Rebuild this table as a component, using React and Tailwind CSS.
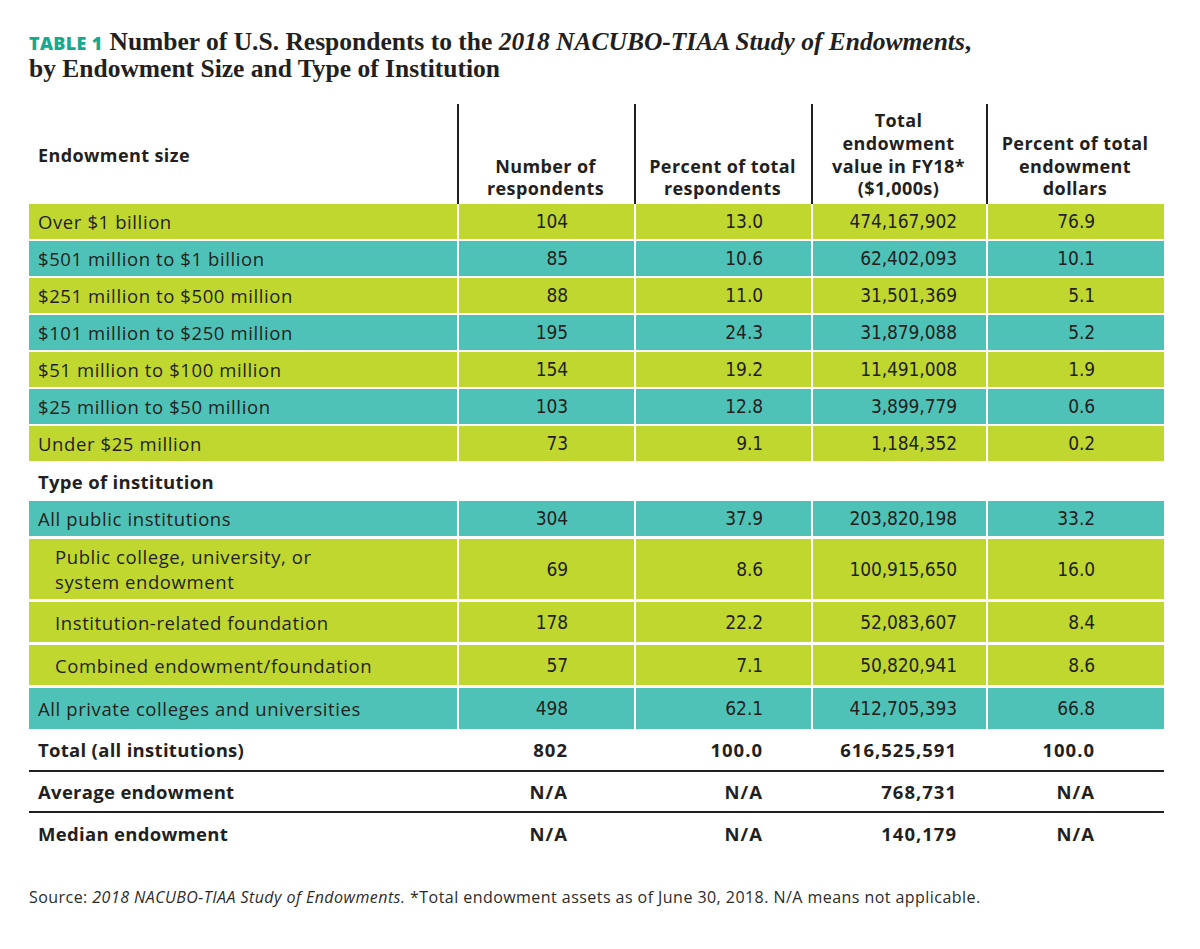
const sizeRows = [
  { label: 'Over $1 billion', n: '104', pct: '13.0', total: '474,167,902', dollars: '76.9', color: 'lime' },
  { label: '$501 million to $1 billion', n: '85', pct: '10.6', total: '62,402,093', dollars: '10.1', color: 'teal' },
  { label: '$251 million to $500 million', n: '88', pct: '11.0', total: '31,501,369', dollars: '5.1', color: 'lime' },
  { label: '$101 million to $250 million', n: '195', pct: '24.3', total: '31,879,088', dollars: '5.2', color: 'teal' },
  { label: '$51 million to $100 million', n: '154', pct: '19.2', total: '11,491,008', dollars: '1.9', color: 'lime' },
  { label: '$25 million to $50 million', n: '103', pct: '12.8', total: '3,899,779', dollars: '0.6', color: 'teal' },
  { label: 'Under $25 million', n: '73', pct: '9.1', total: '1,184,352', dollars: '0.2', color: 'lime' },
];

const typeRows = [
  { label: 'All public institutions', n: '304', pct: '37.9', total: '203,820,198', dollars: '33.2', color: 'teal', h: 'h-[35px]' },
  { label: ['Public college, university, or', 'system endowment'], n: '69', pct: '8.6', total: '100,915,650', dollars: '16.0', color: 'lime', h: 'h-[60px]', indent: true },
  { label: 'Institution-related foundation', n: '178', pct: '22.2', total: '52,083,607', dollars: '8.4', color: 'lime', h: 'h-[40px]', indent: true },
  { label: 'Combined endowment/foundation', n: '57', pct: '7.1', total: '50,820,941', dollars: '8.6', color: 'lime', h: 'h-[40px]', indent: true },
  { label: 'All private colleges and universities', n: '498', pct: '62.1', total: '412,705,393', dollars: '66.8', color: 'teal', h: 'h-[41px]' },
];

const summaryRows = [
  { label: 'Total (all institutions)', n: '802', pct: '100.0', total: '616,525,591', dollars: '100.0', h: 'h-[43px]' },
  { label: 'Average endowment', n: 'N/A', pct: 'N/A', total: '768,731', dollars: 'N/A', h: 'h-[41px]' },
  { label: 'Median endowment', n: 'N/A', pct: 'N/A', total: '140,179', dollars: 'N/A', h: 'h-[42px]' },
];

const sans = "font-['Open_Sans','Liberation_Sans',sans-serif]";
const narrow = "font-['Liberation_Sans_Narrow','DejaVu_Sans_Condensed','Roboto',sans-serif]";
const cols = 'grid grid-cols-[428px_175px_175px_173px_176px] gap-x-[2px]';

function DataRow({ row }) {
  const bg = row.color === 'lime' ? 'bg-[#c0d72f]' : 'bg-[#4fc2b8]';
  const cell = `${bg} flex items-center justify-end ${narrow} text-[19px] tracking-[-0.1px]`;
  return (
    <div className={`${cols} ${row.h || 'h-[35px]'}`}>
      <div className={`${bg} flex flex-col justify-center ${row.indent ? 'pl-[26px]' : 'pl-[9px]'} text-[18.5px] tracking-[0.6px] leading-[25px]`}>
        {Array.isArray(row.label) ? row.label.map((l) => <span key={l}>{l}</span>) : row.label}
      </div>
      <div className={`${cell} pr-[66px]`}>{row.n}</div>
      <div className={`${cell} pr-[48px]`}>{row.pct}</div>
      <div className={`${cell} pr-[29px]`}>{row.total}</div>
      <div className={`${cell} pr-[69px]`}>{row.dollars}</div>
    </div>
  );
}

function App() {
  return (
    <div className={`w-[1200px] h-[949px] bg-white text-[#231f20] ${sans} pl-[29px] pt-[29px]`}>
      <h1 className="text-[25.5px] leading-[26px] font-bold font-['Liberation_Serif',serif]">
        <span className={`${sans} text-[18px] font-extrabold text-[#17a98e] tracking-[0.3px] mr-[7px]`}>TABLE 1</span>
        Number of U.S. Respondents to the <em>2018 NACUBO-TIAA Study of Endowments</em>,
        <br />
        by Endowment Size and Type of Institution
      </h1>

      <div className="mt-[22px] w-[1135px]">
        <div className="grid grid-cols-[428px_177px_177px_175px_178px] h-[100px] text-[18px] tracking-[0.4px] leading-[22.7px] font-bold">
          <div className="self-center pl-[9px] pt-[2px]">Endowment size</div>
          {[
            ['Number of', 'respondents'],
            ['Percent of total', 'respondents'],
            ['Total', 'endowment', 'value in FY18*', '($1,000s)'],
            ['Percent of total', 'endowment', 'dollars'],
          ].map((lines, i) => (
            <div key={i} className="border-l-2 border-[#231f20] flex flex-col justify-end items-center text-center pb-[4px] pr-[2px]">
              {lines.map((l) => <span key={l}>{l}</span>)}
            </div>
          ))}
        </div>

        <div className="flex flex-col gap-[2px]">
          {sizeRows.map((row) => <DataRow key={row.label} row={row} />)}
        </div>

        <div className="h-[40px] flex items-center pl-[9px] text-[18.5px] tracking-[0.3px] font-bold pt-[1px]">Type of institution</div>

        <div className="flex flex-col gap-[3px]">
          {typeRows.map((row, i) => <DataRow key={i} row={row} />)}
        </div>

        {summaryRows.map((row, i) => (
          <div key={row.label} className={`${cols} ${row.h} text-[18.5px] font-bold items-center ${i < 2 ? 'border-b-2 border-[#231f20]' : ''}`}>
            <div className="pl-[9px] tracking-[0.3px]">{row.label}</div>
            <div className="text-right pr-[66px] tracking-[1px]">{row.n}</div>
            <div className="text-right pr-[48px] tracking-[1px]">{row.pct}</div>
            <div className="text-right pr-[29px] tracking-[1px]">{row.total}</div>
            <div className="text-right pr-[69px] tracking-[1px]">{row.dollars}</div>
          </div>
        ))}
      </div>

      <p className="mt-[30px] text-[16px] tracking-[0.45px] text-[#2b2b2b]">
        Source: <em>2018 NACUBO-TIAA Study of Endowments.</em> *Total endowment assets as of June 30, 2018. N/A means not applicable.
      </p>
    </div>
  );
}

export default App;
